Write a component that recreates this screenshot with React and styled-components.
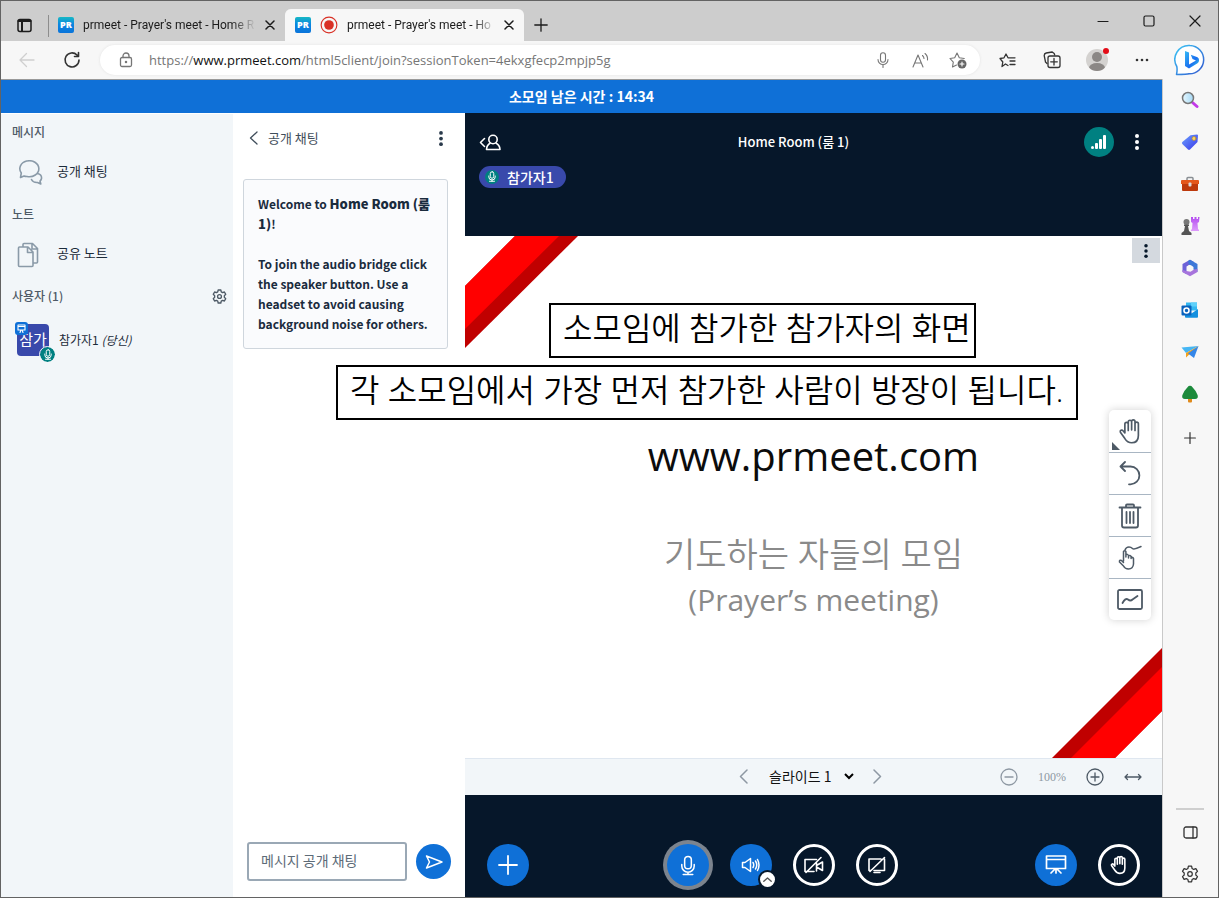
import React from "react";
import styled, { createGlobalStyle } from "styled-components";

const ui = `"Noto Sans CJK KR", "Noto Sans", sans-serif`;
const chrome = `"Open Sans", "Noto Sans", "Noto Sans CJK KR", sans-serif`;

const Global = createGlobalStyle`
  * { box-sizing: border-box; }
  body { margin: 0; font-family: ${ui}; color: #2a3a4b; }
  button { border: 0; padding: 0; background: none; font: inherit; color: inherit; display: flex; align-items: center; justify-content: center; flex: none; }
  h1, h2, h3, p, ul { margin: 0; padding: 0; font: inherit; list-style: none; }
  svg { display: block; flex: none; }
`;

/* ---------- icon helper ---------- */
const Icon = ({ s = 20, h, box, w = 1.3, children, ...rest }) => (
  <svg width={s} height={h || s} viewBox={box || `0 0 ${s} ${h || s}`} fill="none" stroke="currentColor"
    strokeWidth={w} strokeLinecap="round" strokeLinejoin="round" aria-hidden="true" {...rest}>
    {children}
  </svg>
);

const HAND = "M7 13V5.4a1.5 1.5 0 0 1 3 0V11M10 10V3.5a1.5 1.5 0 0 1 3 0V10.500M13 10V3.200a1.500 1.500 0 0 1 3 0V11M16 11V5.200a1.500 1.500 0 0 1 3 0V15.500c0 4-2.300 6.500-6 6.500-3.200 0-4.500-1.300-6-3.700L3 12.600c-.7-1.500 1.300-2.600 2.400-1.200L7 13.300";
const HandIcon = ({ s = 24, w = 1.6 }) => <Icon s={s} box="0 0 24 24" w={w}><path d={HAND} /></Icon>;
const MicIcon = ({ s, h, w = 1.7 }) => (
  <Icon s={s} h={h} box="0 0 16 22" w={w}>
    <rect x="4.500" y="1.500" width="7" height="13" rx="3.500" />
    <path d="M1.500 10v1.500a6.500 6.500 0 0 0 13 0V10M8 18v2.500M3 20.500h10" />
  </Icon>
);
const Dots = ({ h = 16 }) => (
  <svg width="6" height={h} viewBox="0 0 6 16" fill="currentColor" aria-hidden="true">
    <circle cx="3" cy="2" r="2" /><circle cx="3" cy="8" r="2" /><circle cx="3" cy="14" r="2" />
  </svg>
);
const Close = () => <Icon s={10} w={1.5}><path d="M1 1l8 8M9 1L1 9" /></Icon>;

/* ---------- browser frame ---------- */
const Window = styled.div`
  min-height: 100vh; display: flex; flex-direction: column;
  border: 1px solid #636363; background: #f7f7f7; overflow: hidden;
`;
const TabStrip = styled.div`
  height: 40px; background: #cdcdcd; display: flex; align-items: flex-end; color: #1b1b1b;
`;
const TabActions = styled.button`width: 47px; height: 32px;`;
const Tab = styled.div`
  width: ${(p) => (p.$active ? 239 : 237)}px; height: 32px; display: flex; align-items: center; gap: 9px; padding: 0 10px 0 9px;
  background: ${(p) => (p.$active ? "#f7f7f7" : "transparent")};
  border-left: 1px solid ${(p) => (p.$active ? "#f7f7f7" : "#8d8d8d")};
  border-radius: ${(p) => (p.$active ? "6px 6px 0 0" : "0")};
  font: 12px/20px Roboto, ${chrome};
  ${(p) => !p.$active && "border-image: linear-gradient(transparent 20%, #8d8d8d 20% 85%, transparent 85%) 1;"}
`;
const TabTitle = styled.span`
  flex: 1; min-width: 0; overflow: hidden; white-space: nowrap;
  mask-image: linear-gradient(90deg, #000 86%, transparent 100%);
`;
const Favicon = styled.span`
  width: 16px; height: 16px; border-radius: 2px; color: #fff; text-align: center; flex: none;
  background: linear-gradient(#17b8c4, #0b86e0 45%, #0a74da);
  font: 800 9px/16px ${chrome};
`;
const TabPlus = styled.button`width: 34px; height: 32px;`;
const WindowControls = styled.div`margin-left: auto; display: flex; align-self: stretch;`;
const WindowButton = styled.button`width: 46px;`;

const Body = styled.div`flex: 1; display: flex;`;
const Page = styled.div`flex: 1; min-width: 0; display: flex; flex-direction: column;`;
const Toolbar = styled.div`
  height: 38px; display: flex; align-items: center; color: #3a3a3a;
`;
const ToolButton = styled.button`
  width: ${(p) => p.$w || 45}px; height: 32px; position: relative; color: ${(p) => p.$c || "#333"};
`;
const AddressBar = styled.div`
  flex: 1; min-width: 0; height: 30px; background: #fff; border-radius: 15px; display: flex; align-items: center;
  box-shadow: 0 0 3px #e2e2e2; padding: 0 4px 0 18px; gap: 15px; margin: 0 5px 0 9px; color: #767676;
`;
const Url = styled.a`
  flex: 1; min-width: 0; font: 13px/20px ${chrome}; color: #767676; text-decoration: none; white-space: nowrap;
  b { font-weight: 400; color: #111; }
`;
const AddressActions = styled.div`display: flex; align-items: center;`;
const Avatar = styled.span`
  width: 22px; height: 22px; border-radius: 50%; background: #d4d2d0; overflow: hidden; display: block;
`;
const AlertDot = styled.i`
  position: absolute; top: 4px; right: 12px; width: 6px; height: 6px; border-radius: 50%; background: #e30b17;
`;
const EdgeBar = styled.nav`
  width: 56px; display: flex; flex-direction: column; align-items: center; color: #333; padding-bottom: 2px;
`;
const EdgeButton = styled.button`width: 42px; height: ${(p) => p.$h || 42}px;`;
const EdgeRule = styled.hr`
  width: 28px; height: 2px; margin: auto 0 1px; border: 0; background: #cfcfcf;
`;

/* ---------- meeting client ---------- */
const Client = styled.div`
  flex: 1; display: flex; flex-direction: column; background: #fff; border-top: 1px solid #999;
  box-shadow: 1px 0 0 #c9c9c9;
`;
const TimeBanner = styled.div`
  height: 33px; background: #0f70d7; color: #fff; font-size: 14px; font-weight: 700; line-height: 32px; text-align: center;
`;
const Columns = styled.div`flex: 1; display: flex; position: relative;`;

const UserPanel = styled.aside`width: 232px; background: #f2f6f9; padding: 6px 0 0; border-top: 1px solid #fff;`;
const PanelHeading = styled.h2`
  height: 24px; padding: 0 6px 0 11px; display: flex; align-items: center; justify-content: space-between;
  font-size: 12px; line-height: 20px; font-weight: 500; color: #4e5a66;
`;
const PanelItem = styled.button`
  width: 100%; height: ${(p) => p.$h || 58}px; padding: 0 14px; justify-content: flex-start; gap: 9px;
  font-size: 13px; color: #1c2b3a;
`;
const ItemLabel = styled.span`line-height: 20px; padding-bottom: 4px;`;
const ItemIcon = styled.span`width: 33px; color: #8a9aa8; display: flex; padding-left: 2px;`;
const UserTile = styled.span`
  position: relative; width: 32px; height: 32px; margin-left: 2px; border-radius: 4px; background: #3949ab; color: #fff;
  font-size: 15px; line-height: 30px; text-align: center;
`;
const PresenterBadge = styled.span`
  position: absolute; left: -2px; top: -2px; width: 13px; height: 13px; border-radius: 3px; background: #0f70d7;
  display: flex; align-items: center; justify-content: center;
`;
const MicBadge = styled.span`
  position: absolute; right: -6px; bottom: -6px; width: 15px; height: 15px; border-radius: 50%; background: #008081;
  outline: 1px solid #f2f6f9; display: flex; align-items: center; justify-content: center;
`;
const UserName = styled.span`font-size: 12px; line-height: 20px; padding-left: 1px;`;

const ChatPanel = styled.section`
  width: 232px; background: #fff; display: flex; flex-direction: column; padding: 0 10px 16px;
`;
const ChatHeader = styled.header`
  height: 50px; display: flex; align-items: center; justify-content: space-between; padding: 0 11px 0 6px;
`;
const ChatBack = styled.button`gap: 10px; font-size: 13px; line-height: 20px; color: #3f4d5a;`;
const Welcome = styled.article`
  margin: 16px 7px 0 0; padding: 14px; border: 1px solid #cfd6dd; border-radius: 3px; background: #fafbfd;
  font-size: 12px; line-height: 20px; font-weight: 700; color: #1a2b3d;
  b { font-size: 13px; line-height: 18px; }
  p + p { margin-top: 20px; }
`;
const ChatForm = styled.form`
  margin-top: auto; display: flex; align-items: center; gap: 9px; padding: 0 4px;
`;
const ChatInput = styled.input`
  flex: 1; min-width: 0; height: 39px; border: 2px solid #9aa8b5; border-radius: 3px; padding: 0 12px 3px; background: #fff;
  font: 14px/20px ${ui};
  &::placeholder { color: #5d6b78; opacity: 1; }
`;
const Round = styled.button`
  position: relative; width: ${(p) => p.$s || 42}px; height: ${(p) => p.$s || 42}px; border-radius: 50%; color: #fff;
  background: ${(p) => (p.$ghost ? "transparent" : "#0f70d7")};
  ${(p) => p.$ghost && "border: 3px solid #fff;"}
  ${(p) => p.$ring && "box-shadow: 0 0 0 4px #7c848e;"}
`;

const Stage = styled.main`flex: 1; min-width: 0; display: flex; flex-direction: column; background: #06172a;`;
const NavBar = styled.header`height: 123px; padding: 10px 22px 0 14px; color: #fff;`;
const NavRow = styled.div`
  display: grid; grid-template-columns: 1fr auto 1fr; align-items: center; height: 38px;
`;
const RoomTitle = styled.h1`font-size: 13px; font-weight: 500; line-height: 20px; padding-right: 32px;`;
const NavActions = styled.div`display: flex; align-items: center; justify-content: flex-end; gap: 20px;`;
const Signal = styled.button`width: 30px; height: 30px; border-radius: 50%; background: #008081; color: #fff;`;
const Talker = styled.button`
  margin-top: 5px; height: 22px; border-radius: 11px; background: #3949ab; padding: 0 12px 1px 6px; gap: 8px;
  font-size: 14px; font-weight: 500; line-height: 20px;
`;
const TalkerMic = styled.span`
  width: 14px; height: 14px; border-radius: 50%; background: #008081; display: flex; align-items: center; justify-content: center;
`;
const Slide = styled.section`
  flex: 1; position: relative; background: #fff; display: flex; flex-direction: column; align-items: center;
  padding-top: 190px; overflow: hidden; font-family: ${chrome};
`;
const Ribbon = styled.svg`
  position: absolute; ${(p) => (p.$end ? "right: 0; bottom: 0;" : "left: 0; top: 0;")}
`;
const SlideUrl = styled.p`font-size: 40px; line-height: 60px; color: #0c0c0c;`;
const SlideText = styled.p`
  font-size: ${(p) => p.$s}px; line-height: 46px; color: #8a8a8a; font-weight: ${(p) => p.$weight || 400};
  margin-top: ${(p) => p.$gap || 0}px;
`;
const SlideMenu = styled.button`
  position: absolute; top: 2px; right: 2px; width: 28px; height: 25px; background: #d4d9df; color: #06172a;
`;
const Palette = styled.div`
  position: absolute; right: 11px; bottom: 138px; width: 42px; border-radius: 5px; background: #fff;
  box-shadow: 0 0 8px #d2d2d2;
`;
const PaletteButton = styled.button`
  position: relative; width: 42px; height: 42px; color: #4e5a66;
  & + & { border-top: 1px solid #a9b6c3; }
`;
const Corner = styled.i`
  position: absolute; left: 3px; bottom: 2px; border: 4px solid transparent; border-left-color: #4e5a66; border-bottom-color: #4e5a66;
`;
const SlideBar = styled.div`
  height: 37px; background: #f2f6f9; border-top: 1px solid #dfe7f0; display: grid;
  grid-template-columns: 1fr auto 1fr; align-items: center; padding: 0 20px 1px; color: #8e98a3;
`;
const Pager = styled.div`display: flex; align-items: center; gap: 19px; padding-right: 6px;`;
const SlideSelect = styled.select`
  appearance: none; border: 0; width: 87px; height: 24px; color: #111; padding: 0 0 2px 2px;
  font: 400 14px/20px ${ui};
  background: url("data:image/svg+xml,%3Csvg xmlns='http://www.w3.org/2000/svg' width='10' height='7' fill='none' stroke='%23000' stroke-width='2'%3E%3Cpath d='M1 1l4 4 4-4'/%3E%3C/svg%3E") no-repeat right 0 center;
`;
const Zoom = styled.div`display: flex; align-items: center; justify-content: flex-end; gap: 20px;`;
const ZoomValue = styled.span`font: 12px/20px "Liberation Serif", serif;`;
const ActionBar = styled.footer`
  height: 102px; padding: 49px 22px 0; display: flex; justify-content: space-between;
`;
const Group = styled.div`display: flex; gap: 21px;`;
const AudioMore = styled.span`
  position: absolute; right: -3px; bottom: -1px; width: 15px; height: 15px; border-radius: 50%; background: #fff;
  box-shadow: 0 0 0 2px #06172a; color: #555; display: flex; align-items: center; justify-content: center;
`;
const Note = styled.p`
  position: absolute; top: ${(p) => p.$y}px; left: ${(p) => p.$x}px; height: 55px; padding: 0 ${(p) => p.$end}px 0 12px;
  border: 2px solid #000; background: #fff; color: #000; white-space: nowrap;
  font: 350 32px/46px ${chrome};
`;

const EDGE = [
  ["검색", <Icon s={18} key="s"><defs><linearGradient id="lens"><stop stopColor="#e6f8ff" /><stop offset="1" stopColor="#a5d8f5" /></linearGradient></defs><path d="M11.500 11.500l4.500 4" stroke="#c239e8" strokeWidth="3" /><circle cx="7" cy="7" r="5.500" fill="url(#lens)" stroke="#777" strokeWidth="1.500" /></Icon>],
  ["쇼핑", <Icon s={18} stroke="none" key="t"><defs><linearGradient id="tag" x2="1" y2="1"><stop stopColor="#6ca2ff" /><stop offset="1" stopColor="#3a36e8" /></linearGradient></defs><path d="M9.500 2.200L16 1.500q1 0 1 1L16.500 9 9 16.500q-1 .8-2 0L1.300 11q-.8-1 0-2z" fill="url(#tag)" /><circle cx="13" cy="5.500" r="2" fill="#f7d568" stroke="#b98a2c" strokeWidth=".7" /></Icon>],
  ["도구", <Icon s={20} stroke="none" key="b"><path d="M7 6V4.500q0-1 1-1h4q1 0 1 1V6" stroke="#8a8f94" strokeWidth="1.500" /><path d="M2 6h16q1 0 1 1v3H1V7q0-1 1-1z" fill="#e4571b" /><path d="M2 10h16v6q0 1-1 1H3q-1 0-1-1z" fill="#bd3a0c" /><rect x="8.500" y="8.500" width="3" height="4" rx="1" fill="#d9dde0" /></Icon>],
  ["게임", <Icon s={20} stroke="none" key="g"><defs><linearGradient id="rook" x2="0" y2="1"><stop stopColor="#b44cf0" /><stop offset="1" stopColor="#dd9cfb" /></linearGradient></defs><path d="M11 1h2v2h1.500V1h2v2H18V1h1.500l-.5 5-1.500 1 .5 6 1 1v1h-8v-1l1-1 .5-6-1.500-1z" fill="url(#rook)" /><circle cx="6.500" cy="6" r="3" fill="#777" /><path d="M4 8.500h5v1.500H8l1 5 2.500 2v2H1.500v-2L4 15l1-5H4z" fill="#555" /></Icon>],
  ["Microsoft 365", <Icon s={18} stroke="none" key="m"><path d="M9 .8L1.500 5v8l4 2.300V7.500L13 3z" fill="#6c62d8" /><path d="M9 .8l7.500 4.200v8L12.500 10.500V8L8 5.500 7 2z" fill="#3d78d8" /><path d="M16.500 10v3L9 17.300 1.500 13v-2l4 1 4 .8 3.500-2.300z" fill="#a774dc" /><circle cx="9" cy="9" r="2.800" fill="#f7f7f7" /></Icon>],
  ["Outlook", <Icon s={18} stroke="none" key="o"><path d="M5 1.500h11v8H5z" fill="#35b8f1" /><path d="M10 1.500h6v4h-6z" fill="#5fd0fa" /><path d="M4 8l6.500 4.500L17 8v8q0 .8-1 .8H5q-1 0-1-.8z" fill="#1490df" /><rect x=".5" y="4.500" width="10" height="10" rx="1" fill="#0a62bd" /><circle cx="5.500" cy="9.500" r="2.500" stroke="#fff" strokeWidth="1.600" /></Icon>],
  ["Drop", <Icon s={18} stroke="none" key="d"><path d="M.5 4.500L17.500 3 5 10z" fill="#45b6f4" /><path d="M17.500 3L5 10v4.500z" fill="#f5a21b" /><path d="M17.500 3L7 10.500l6 4.500z" fill="#3486e8" /></Icon>],
  ["나무", <Icon s={18} stroke="none" key="n"><rect x="7" y="12" width="4" height="5.500" rx="1" fill="#e08a1c" /><path d="M9 .8q1.500 0 2.500 1.400 4 4 5.200 8 .8 3.800-2.700 3.800H4Q.5 14 1.300 10.200q1.200-4 5.200-8Q7.500.8 9 .8z" fill="#1d8a3c" /></Icon>],
];

const Gear = ({ s, w = 1.2 }) => (
  <Icon s={s} box="0 0 18 18" w={w}>
    <path d="M7.400 1.200h3.200l.5 2.300 1.600.9 2.200-.8 1.600 2.800-1.700 1.600v2l1.700 1.600-1.600 2.800-2.200-.8-1.600.9-.5 2.300H7.400l-.5-2.300-1.600-.9-2.200.8-1.600-2.800L3.200 10V8L1.500 6.400l1.600-2.800 2.200.8 1.600-.9z" />
    <circle cx="9" cy="9" r="2.300" />
  </Icon>
);

export default function App() {
  return (
    <>
      <Global />
      <Window>
        <TabStrip>
          <TabActions aria-label="탭 작업"><Icon s={15} w={1.5}><rect x="1" y="1.500" width="13" height="12" rx="2" /><path d="M1.500 3h12M5 4v9" strokeWidth="2" /></Icon></TabActions>
          <Tab>
            <Favicon>PR</Favicon>
            <TabTitle>prmeet - Prayer's meet - Home R</TabTitle>
            <button aria-label="탭 닫기"><Close /></button>
          </Tab>
          <Tab $active>
            <Favicon>PR</Favicon>
            <Icon s={18} box="0 0 16 16"><circle cx="8" cy="8" r="7" stroke="#d93025" strokeWidth="1" /><circle cx="8" cy="8" r="4.300" fill="#d93025" stroke="none" /></Icon>
            <TabTitle>prmeet - Prayer's meet - Ho</TabTitle>
            <button aria-label="탭 닫기"><Close /></button>
          </Tab>
          <TabPlus aria-label="새 탭"><Icon s={14}><path d="M7 .8v12.400M.8 7h12.400" /></Icon></TabPlus>
          <WindowControls>
            <WindowButton aria-label="최소화"><Icon s={12} w={1.2}><path d="M1 6.500h10" /></Icon></WindowButton>
            <WindowButton aria-label="최대화"><Icon s={12} w={1.2}><rect x="1" y="1" width="10" height="10" rx="1.500" /></Icon></WindowButton>
            <WindowButton aria-label="닫기"><Icon s={12} w={1.2}><path d="M1 1l10 10M11 1L1 11" /></Icon></WindowButton>
          </WindowControls>
        </TabStrip>

        <Body>
          <Page>
            <Toolbar>
              <ToolButton $c="#cfcfcf" $w={52} aria-label="뒤로"><Icon s={16}><path d="M15 8H1M7.500 1.500L1 8l6.500 6.500" /></Icon></ToolButton>
              <ToolButton $w={38} aria-label="새로 고침"><Icon s={18} w={1.6}><path d="M16 9a7 7 0 1 1-2-5l1.500 1.500M15.500 1.500v4h-4" /></Icon></ToolButton>
              <AddressBar>
                <Icon s={16}><rect x="2.500" y="5.500" width="11" height="9" rx="1.500" /><path d="M5 5.500V4a3 3 0 0 1 6 0v1.500" /><circle cx="8" cy="10" r=".6" fill="currentColor" /></Icon>
                <Url href="#url">https://<b>www.prmeet.com</b>/html5client/join?sessionToken=4ekxgfecp2mpjp5g</Url>
                <AddressActions>
                  <ToolButton $w={37} $c="#767676" aria-label="마이크"><Icon s={12} h={16} w={1.1}><rect x="3.500" y=".8" width="5" height="9.500" rx="2.500" /><path d="M1 7.500a5 5 0 0 0 10 0M6 12.500v3" /></Icon></ToolButton>
                  <ToolButton $w={38} $c="#767676" aria-label="소리내어 읽기"><Icon s={17} w={1.1}><path d="M1 15L6 3l5 12M3 11h6.200M10.500 3.500q1.500 1.500 1.500 3M13 1.500q3 2.500 2.500 6.500" /></Icon></ToolButton>
                  <ToolButton $w={37} $c="#767676" aria-label="즐겨찾기 추가"><Icon s={18} w={1.1}><path d="M7.500 14L3.500 16l.8-4.800L1 7.500l4.700-.7L8 2l2.300 4.800 5 .7" /><circle cx="13" cy="13" r="4.500" fill="#666" stroke="none" /><path d="M13 11v4M11 13h4" stroke="#fff" /></Icon></ToolButton>
                </AddressActions>
              </AddressBar>
              <ToolButton aria-label="즐겨찾기"><Icon s={17}><path d="M9 13.500L6.500 12 3 14.500l.8-4.500L1 6.500l4-.7L7 2l2 3.800h7M11 9h5M11 12.500h5" /></Icon></ToolButton>
              <ToolButton $w={43} aria-label="컬렉션"><Icon s={18}><path d="M4 12.500L2.500 11 1.200 4.500q0-2 2-2.500l6-1 2 1.500.5 1.500" /><rect x="5" y="5" width="12" height="11.500" rx="2" /><path d="M11 7.500v6.500M7.700 10.800h6.600" /></Icon></ToolButton>
              <ToolButton $w={48} aria-label="프로필"><Avatar><svg width="22" height="22" fill="#8b8785"><circle cx="11" cy="8" r="5" /><ellipse cx="11" cy="19" rx="8" ry="5" /></svg></Avatar><AlertDot /></ToolButton>
              <ToolButton $w={41} aria-label="설정 및 기타"><svg width="14" height="4" fill="#333"><circle cx="2" cy="2" r="1.300" /><circle cx="7" cy="2" r="1.300" /><circle cx="12" cy="2" r="1.300" /></svg></ToolButton>
            </Toolbar>

            <Client>
              <TimeBanner role="timer">소모임 남은 시간 : 14:34</TimeBanner>
              <Columns>
                <UserPanel>
                  <PanelHeading>메시지</PanelHeading>
                  <PanelItem>
                    <ItemIcon><Icon s={28} h={26} w={1.6}><path d="M3.500 17.500l.8-4.500A9.500 8 0 1 1 10 16.500q-2 0-3-.5zM20.500 13.500q4.500 1 4 5-.3 1.500-1.500 2.500l.8 3-3.300-1.500q-4.500.3-6-3" /></Icon></ItemIcon>
                    <ItemLabel>공개 채팅</ItemLabel>
                  </PanelItem>
                  <PanelHeading>노트</PanelHeading>
                  <PanelItem>
                    <ItemIcon><Icon s={23} h={26} w={1.6}><path d="M2.500 5h8.500l5 5v13.500q0 1-1 1H2.500q-1 0-1-1V6q0-1 1-1zM10.500 5.500v5h5M6 4.500V2.500q0-1 1-1h8.500l5 5V20q0 1-1 1h-3M15 2v5h5" /></Icon></ItemIcon>
                    <ItemLabel>공유 노트</ItemLabel>
                  </PanelItem>
                  <PanelHeading>사용자 (1)<button aria-label="사용자 관리"><Gear s={15} w={1.600} /></button></PanelHeading>
                  <PanelItem $h={64}>
                    <UserTile>
                      참가
                      <PresenterBadge><Icon s={9} w={1.1}><path d="M1 1h7v5H1zM1 2.500h7M3 8.500L4 6M6 8.500L5 6" stroke="#fff" /></Icon></PresenterBadge>
                      <MicBadge><MicIcon s={8} h={11} w={2} /></MicBadge>
                    </UserTile>
                    <UserName>참가자1 <i>(당신)</i></UserName>
                  </PanelItem>
                </UserPanel>

                <ChatPanel>
                  <ChatHeader>
                    <ChatBack><Icon s={9} h={14}><path d="M8 1L1.500 7 8 13" /></Icon>공개 채팅</ChatBack>
                    <button aria-label="채팅 옵션"><Dots h={15} /></button>
                  </ChatHeader>
                  <Welcome>
                    <p>Welcome to <b>Home Room (룸 1)</b>!</p>
                    <p>To join the audio bridge click the speaker button. Use a headset to avoid causing background noise for others.</p>
                  </Welcome>
                  <ChatForm>
                    <ChatInput aria-label="메시지 입력" placeholder="메시지 공개 채팅" />
                    <Round $s={35} type="button" aria-label="보내기"><Icon s={18} h={14} w={1.5}><path d="M1.500 1L17 7 1.500 13 4.500 7z" /></Icon></Round>
                  </ChatForm>
                </ChatPanel>

                <Stage>
                  <NavBar>
                    <NavRow>
                      <div><button aria-label="사용자 목록"><Icon s={23} h={17} w={1.6}><path d="M5.500 4.500L1.500 8.500l4 4" /><circle cx="14" cy="5.500" r="4.200" /><path d="M11 9.300q-3.200 1.700-3.500 6.200h13.500q-.3-4.500-3.800-6.200" /></Icon></button></div>
                      <RoomTitle>Home Room (룸 1)</RoomTitle>
                      <NavActions>
                        <Signal aria-label="연결 상태"><svg width="16" height="16" fill="#fff"><rect x="0" y="12" width="3" height="3" rx="1.500" /><rect x="4" y="9" width="3" height="6" rx="1" /><rect x="8" y="5" width="3" height="10" rx="1" /><rect x="12" y="1" width="3" height="14" rx="1" /></svg></Signal>
                        <button aria-label="옵션"><Dots h={16} /></button>
                      </NavActions>
                    </NavRow>
                    <Talker><TalkerMic><MicIcon s={8} h={11} w={2} /></TalkerMic>참가자1</Talker>
                  </NavBar>

                  <Slide>
                    <Ribbon width="113" height="112"><path d="M0 112V50L50 0h63z" fill="#c00000" /><path d="M0 93V50L50 0h44z" fill="red" /></Ribbon>
                    <Ribbon $end width="110" height="110"><path d="M110 0v63l-47 47H0z" fill="#c00000" /><path d="M110 19v44l-47 47H19z" fill="red" /></Ribbon>
                    <SlideUrl>www.prmeet.com</SlideUrl>
                    <SlideText $s={34} $gap={45} $weight={350}>기도하는 자들의 모임</SlideText>
                    <SlideText $s={30}>(Prayer’s meeting)</SlideText>
                    <SlideMenu aria-label="프레젠테이션 옵션"><Dots h={14} /></SlideMenu>
                    <Palette>
                      <PaletteButton aria-label="이동"><HandIcon s={27} w={1.5} /><Corner /></PaletteButton>
                      <PaletteButton aria-label="실행 취소"><Icon s={22} h={25} w={1.8}><path d="M6 1L1.500 5.500 6 10M1.500 5.500h10a8.800 8.800 0 0 1 0 17.800H10" /></Icon></PaletteButton>
                      <PaletteButton aria-label="모두 지우기"><Icon s={24} h={26} w={1.8}><path d="M1.500 4.500h21M4 5v17.500q0 2 2 2h12q2 0 2-2V5M8 4V2.500q0-1 1-1h6q1 0 1 1V4M8.500 9v11M12 9v11M15.500 9v11" /></Icon></PaletteButton>
                      <PaletteButton aria-label="다중 사용자"><Icon s={26} h={26} w={1.5}><path d="M6.500 16V6.500q1.200-1.500 2.400 0V12M8.900 10q1.500-1.500 2.600.5V13M11.500 11q1.500-1.200 2.600.5v2M14.100 12.500q2-.5 2.400 1V19q-.5 5-5 5-3.500 0-5-3L2.500 17q-.5-2.500 2-1.500l2 2M8 5q1-3 4-3 2 0 3.500 1.500T24 1.500" /></Icon></PaletteButton>
                      <PaletteButton aria-label="스마트 슬라이드"><Icon s={26} h={21} w={1.8}><rect x="1" y="1" width="24" height="19" rx="1.500" /><path d="M5.500 14q3-5.500 5.500-3.500t4.500 0L20.500 7" /></Icon></PaletteButton>
                    </Palette>
                  </Slide>

                  <SlideBar>
                    <span />
                    <Pager>
                      <button aria-label="이전 슬라이드"><Icon s={9} h={15} w={1.5}><path d="M8 1L1.500 7.500 8 14" /></Icon></button>
                      <SlideSelect aria-label="슬라이드 선택" defaultValue="1"><option value="1">슬라이드 1</option></SlideSelect>
                      <button aria-label="다음 슬라이드"><Icon s={9} h={15} w={1.5}><path d="M1 1l6.500 6.500L1 14" /></Icon></button>
                    </Pager>
                    <Zoom>
                      <button aria-label="축소"><Icon s={18}><circle cx="9" cy="9" r="8" /><path d="M5 9h8" /></Icon></button>
                      <ZoomValue>100%</ZoomValue>
                      <button aria-label="확대"><Icon s={18} stroke="#4e5a66"><circle cx="9" cy="9" r="8" /><path d="M5 9h8M9 5v8" /></Icon></button>
                      <button aria-label="너비에 맞춤"><Icon s={18} h={8} stroke="#4e5a66"><path d="M1 4h16M3.500 1.500L1 4l2.500 2.500M14.500 1.500L17 4l-2.500 2.500" /></Icon></button>
                    </Zoom>
                  </SlideBar>

                  <ActionBar>
                    <Group><Round aria-label="작업"><Icon s={20} w={1.8}><path d="M10 1v18M1 10h18" /></Icon></Round></Group>
                    <Group>
                      <Round $ring aria-label="음소거"><MicIcon s={16} h={21} w={1.6} /></Round>
                      <Round aria-label="오디오"><Icon s={19} h={16} w={1.5}><path d="M1.500 5.500H4L9.500 1.500v13L4 10.500H1.500zM12 5.500q1.500 2.500 0 5M14.500 4q2.500 4 0 8M16.500 2.500q3 5.500 0 11" /></Icon><AudioMore><Icon s={9} h={5} w={1.4}><path d="M.8 4.200L4.500 1l3.700 3.200" /></Icon></AudioMore></Round>
                      <Round $ghost aria-label="웹캠 공유"><Icon s={22} h={18} w={1.6}><path d="M11 15.500H2v-12h11.500M13.500 7v8M13.500 9.500l6-3.500v8.500l-6-3.500M3 16.500L18 1.500" /></Icon></Round>
                      <Round $ghost aria-label="화면 공유"><Icon s={20} h={18} w={1.6}><path d="M14 3H2v11.500h2M7 14.500h10.500V3M7 16.500h6M3 15.500L17.500 1.500" /></Icon></Round>
                    </Group>
                    <Group>
                      <Round aria-label="프레젠테이션"><Icon s={22} w={1.7}><path d="M1.500 2h19v12.500h-19zM1.500 5.500h19M11 15v4M10 15l-4 4M12 15l4 4" /></Icon></Round>
                      <Round $ghost aria-label="손들기"><HandIcon s={20} w={1.9} /></Round>
                    </Group>
                  </ActionBar>
                </Stage>
                <Note $x={548} $y={190} $end={3}>소모임에 참가한 참가자의 화면</Note>
                <Note $x={335} $y={252} $end={12}>각 소모임에서 가장 먼저 참가한 사람이 방장이 됩니다.</Note>
              </Columns>
            </Client>
          </Page>

          <EdgeBar>
            <EdgeButton $h={38} aria-label="Bing">
              <Icon s={32}>
                <defs>
                  <linearGradient id="ring" x2="1" y2="1"><stop stopColor="#3cc6f5" /><stop offset="1" stopColor="#3257cf" /></linearGradient>
                  <linearGradient id="bing" x2="1" y2="1"><stop stopColor="#35b9f5" /><stop offset=".6" stopColor="#1b6ff0" /><stop offset="1" stopColor="#35d5e8" /></linearGradient>
                </defs>
                <path d="M16 1.500a14 14 0 1 1-1 28.300q-1.500.7-12.500.7 1-4.500.3-8A14 14 0 0 1 16 1.500z" fill="#fff" stroke="url(#ring)" strokeWidth="1.500" />
                <path d="M11 7l4 1.500v12l7-4-3.500-1.500-1.700-4.300 6.700 2.500q2 1 1.500 3.800-.3 1.500-1.500 2.200L15 24.500l-4-2.500z" fill="url(#bing)" stroke="none" />
              </Icon>
            </EdgeButton>
            {EDGE.map(([label, icon]) => <EdgeButton key={label} aria-label={label}>{icon}</EdgeButton>)}
            <EdgeButton $h={46} aria-label="추가"><Icon s={12} w={1.2}><path d="M6 .6v10.800M.6 6h10.800" /></Icon></EdgeButton>
            <EdgeRule />
            <EdgeButton aria-label="사이드바 숨기기"><Icon s={15} h={13}><rect x="1" y="1" width="13" height="11" rx="2" /><path d="M10 1v11" /></Icon></EdgeButton>
            <EdgeButton aria-label="사이드바 설정"><Gear s={18} /></EdgeButton>
          </EdgeBar>
        </Body>
      </Window>
    </>
  );
}
